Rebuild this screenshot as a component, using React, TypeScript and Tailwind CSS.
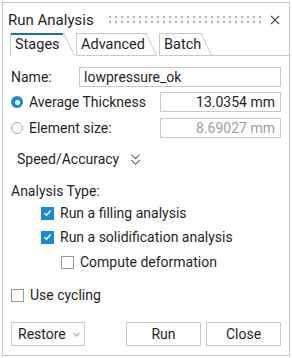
import { ChevronsDown } from "lucide-react";

function Radio({ checked }: { checked: boolean }) {
  return checked ? (
    <span className="w-[12px] h-[12px] rounded-full bg-[#1a8ad6] flex items-center justify-center shrink-0">
      <span className="w-[5px] h-[5px] rounded-full bg-white" />
    </span>
  ) : (
    <span className="w-[12px] h-[12px] rounded-full border border-[#a8a8a8] bg-white shrink-0" />
  );
}

function Check({ checked }: { checked: boolean }) {
  return checked ? (
    <span className="w-[13px] h-[13px] bg-[#1a8ad6] flex items-center justify-center shrink-0">
      <svg width="9" height="8" viewBox="0 0 9 8">
        <path d="M1.5 4.2 L3.6 6.2 L7.6 1.6" stroke="white" strokeWidth="1.5" fill="none" />
      </svg>
    </span>
  ) : (
    <span className="w-[13px] h-[13px] border border-[#9a9a9a] bg-white shrink-0" />
  );
}

function Tab({ label, active, width }: { label: string; active?: boolean; width: number }) {
  return (
    <div className="relative h-[23px] flex items-center" style={{ width }}>
      <div className="absolute inset-0 border-l border-t border-[#c8c8c8]" style={{ right: 10 }} />
      <svg className="absolute top-0 right-0" width="11" height="23" viewBox="0 0 11 23">
        <path d="M0 0.5 L10.5 22.5" stroke="#c8c8c8" strokeWidth="1" fill="none" />
      </svg>
      {active && <div className="absolute top-0 left-[1px] h-[2px] bg-[#17759f]" style={{ width: width - 13 }} />}
      {!active && <div className="absolute bottom-0 left-0 right-0 h-px bg-[#c8c8c8]" />}
      <span className="pl-[5px] pt-[1px]">{label}</span>
    </div>
  );
}

export default function App() {
  return (
    <div
      className="w-[292px] h-[358px] bg-white p-[2px] text-[14px] text-[#1f1f28]"
      style={{ fontFamily: "Roboto, 'Liberation Sans', sans-serif" }}
    >
      <div className="h-full border border-[#c8c8c8] flex flex-col">
        <div className="flex items-center h-[28px] pt-[6px] pl-[5px] pr-[9px]">
          <span className="text-[15px]">Run Analysis</span>
          <svg className="ml-[15px]" width="152" height="9" viewBox="0 0 152 9">
            <defs>
              <pattern id="grip" width="6" height="5" patternUnits="userSpaceOnUse">
                <rect x="0" y="0" width="2" height="2" fill="#b0b0b0" />
              </pattern>
            </defs>
            <rect x="0" y="0" width="152" height="7" fill="url(#grip)" />
          </svg>
          <svg className="ml-auto" width="10" height="10" viewBox="0 0 10 10">
            <path d="M1 1 L9 9 M9 1 L1 9" stroke="#555" strokeWidth="1.2" />
          </svg>
        </div>

        <div className="flex items-end pl-[7px] mt-[2px] text-[14.5px]">
          <Tab label="Stages" active width={65} />
          <div className="w-[1px]" />
          <Tab label="Advanced" width={81} />
          <div className="w-[2px] h-px" />
          <Tab label="Batch" width={53} />
          <div className="flex-1 h-px bg-[#c8c8c8] mb-0" />
        </div>

        <div className="flex flex-col pl-[8px] pr-[8px] pt-[11px]">
          <div className="flex items-center h-[20px]">
            <span className="w-[68px]">Name:</span>
            <div className="flex-1 h-[20px] border border-[#c8c8c8] px-[4px] flex items-center">lowpressure_ok</div>
          </div>
          <div className="flex items-center h-[20px] mt-[5px]">
            <Radio checked />
            <span className="ml-[6px] w-[131px]">Average Thickness</span>
            <div className="flex-1 h-[20px] border border-[#c8c8c8] px-[5px] flex items-center justify-end">13.0354 mm</div>
          </div>
          <div className="flex items-center h-[20px] mt-[6px]">
            <Radio checked={false} />
            <span className="ml-[6px] w-[131px]">Element size:</span>
            <div className="flex-1 h-[20px] border border-[#c8c8c8] px-[5px] flex items-center justify-end text-[#a0a0a0]">8.69027 mm</div>
          </div>

          <div className="flex items-center mt-[11px] h-[20px] pl-[6px]">
            <span>Speed/Accuracy</span>
            <ChevronsDown className="ml-[7px] text-[#555]" size={19} strokeWidth={1.3} />
          </div>

          <div className="mt-[12px] h-[20px] flex items-center">Analysis Type:</div>
          <div className="flex items-center h-[20px] mt-[2px] pl-[30px]">
            <Check checked />
            <span className="ml-[6px]">Run a filling analysis</span>
          </div>
          <div className="flex items-center h-[20px] mt-[4px] pl-[30px]">
            <Check checked />
            <span className="ml-[6px]">Run a solidification analysis</span>
          </div>
          <div className="flex items-center h-[20px] mt-[5px] pl-[50px]">
            <Check checked={false} />
            <span className="ml-[6px]">Compute deformation</span>
          </div>

          <div className="flex items-center h-[20px] mt-[13px]">
            <Check checked={false} />
            <span className="ml-[6px]">Use cycling</span>
          </div>

          <div className="flex items-center mt-[17px] h-[24px]">
            <div className="w-[74px] h-[24px] border border-[#c8c8c8] flex items-center pl-[6px]">
              <span>Restore</span>
              <svg className="ml-[7px]" width="7" height="5" viewBox="0 0 7 5">
                <path d="M0.5 0.8 L3.5 4 L6.5 0.8" stroke="#aaa" strokeWidth="1.2" fill="none" />
              </svg>
            </div>
            <div className="ml-auto w-[75px] h-[24px] border border-[#c8c8c8] flex items-center justify-center">Run</div>
            <div className="ml-[5px] w-[75px] h-[24px] border border-[#c8c8c8] flex items-center justify-center">Close</div>
          </div>
        </div>
      </div>
    </div>
  );
}
